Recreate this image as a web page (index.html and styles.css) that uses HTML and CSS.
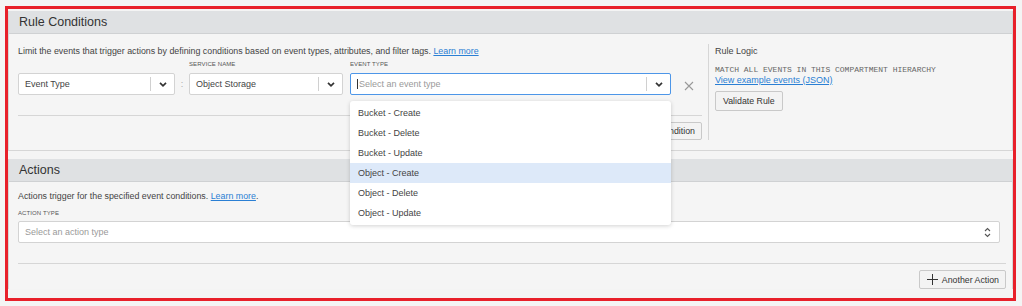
FILE: index.html
```html
<!DOCTYPE html>
<html lang="en">

<head>
    <meta charset="UTF-8">
    <title>Create Rule</title>
    <link rel="stylesheet" href="styles.css">
</head>

<body>
    <div class="frame">
        <section class="panel">
            <div class="panel-head">Rule Conditions</div>
            <div class="rule-body">
                <div class="cond-col">
                    <p class="hint">Limit the events that trigger actions by defining conditions based on event types, attributes, and filter tags. <a href="#">Learn more</a></p>
                    <div class="cond-row">
                        <div class="field f-type">
                            <span class="field-label"></span>
                            <div class="select">
                                <span class="select-text">Event Type</span>
                                <span class="select-arrow">
                                    <svg width="8" height="5" viewBox="0 0 8 5"><path d="M1 0.8l3 3 3-3" fill="none" stroke="#333" stroke-width="1.7"/></svg>
                                </span>
                            </div>
                        </div>
                        <span class="colon">:</span>
                        <div class="field f-service">
                            <span class="field-label">SERVICE NAME</span>
                            <div class="select">
                                <span class="select-text">Object Storage</span>
                                <span class="select-arrow">
                                    <svg width="8" height="5" viewBox="0 0 8 5"><path d="M1 0.8l3 3 3-3" fill="none" stroke="#333" stroke-width="1.7"/></svg>
                                </span>
                            </div>
                        </div>
                        <div class="field f-event">
                            <span class="field-label">EVENT TYPE</span>
                            <div class="select focused">
                                <span class="select-text placeholder"><i class="caret"></i>Select an event type</span>
                                <span class="select-arrow">
                                    <svg width="8" height="5" viewBox="0 0 8 5"><path d="M1 0.8l3 3 3-3" fill="none" stroke="#333" stroke-width="1.7"/></svg>
                                </span>
                            </div>
                            <ul class="menu">
                                <li>Bucket - Create</li>
                                <li>Bucket - Delete</li>
                                <li>Bucket - Update</li>
                                <li class="active">Object - Create</li>
                                <li>Object - Delete</li>
                                <li>Object - Update</li>
                            </ul>
                        </div>
                        <button class="remove" title="Remove">
                            <svg width="10" height="10" viewBox="0 0 10 10"><path d="M1 1l8 8M9 1l-8 8" stroke="#999" stroke-width="1.1"/></svg>
                        </button>
                    </div>
                    <div class="cond-foot">
                        <button class="btn">+ Another Condition</button>
                    </div>
                </div>
                <div class="logic-col">
                    <div class="logic-title">Rule Logic</div>
                    <div class="logic-code">MATCH ALL EVENTS IN THIS COMPARTMENT HIERARCHY</div>
                    <a class="logic-link" href="#">View example events (JSON)</a>
                    <button class="btn validate">Validate Rule</button>
                </div>
            </div>
        </section>

        <section class="panel actions">
            <div class="panel-head">Actions</div>
            <div class="actions-body">
                <p class="hint">Actions trigger for the specified event conditions. <a href="#">Learn more</a>.</p>
                <span class="field-label">ACTION TYPE</span>
                <div class="select wide">
                    <span class="select-text placeholder">Select an action type</span>
                    <svg class="spin" width="7" height="11" viewBox="0 0 7 11"><path d="M1 4l2.5-2.5L6 4M1 7l2.5 2.5L6 7" fill="none" stroke="#555" stroke-width="1.1"/></svg>
                </div>
                <div class="actions-foot">
                    <button class="btn add">
                        <svg width="11" height="11" viewBox="0 0 11 11"><path d="M5.5 0v11M0 5.5h11" stroke="#333" stroke-width="1"/></svg>
                        Another Action
                    </button>
                </div>
            </div>
        </section>
    </div>
</body>

</html>
```

FILE: styles.css
```css
body {
    margin: 0;
    background: #f4f4f4;
    font-family: "Liberation Sans", Arial, sans-serif;
    color: #444;
}

.frame {
    margin: 6px 0 0 5px;
    width: 1005px;
    height: 287px;
    border: 3px solid #e8202a;
    padding-top: 2px;
    box-sizing: content-box;
}

.panel {
    border: 1px solid #d6d6d6;
    border-top: none;
    background: #f5f5f5;
}

.panel-head {
    height: 22px;
    line-height: 22px;
    padding-left: 10px;
    background: #dfe1e3;
    border-bottom: 1px solid #cfd1d3;
    font-size: 12.5px;
    color: #333;
}

a {
    color: #2a7fd4;
}

.hint {
    margin: 0;
    font-size: 8.85px;
    line-height: 14px;
    color: #444;
}

/* rule conditions */
.rule-body {
    display: flex;
    padding: 10px 0 10px 9px;
}

.cond-col {
    width: 682px;
    margin-right: 8px;
}

.cond-row {
    display: flex;
    align-items: flex-end;
    margin-top: 2px;
}

.field {
    position: relative;
    display: flex;
    flex-direction: column;
}

.field-label {
    display: block;
    height: 8px;
    line-height: 8px;
    margin-bottom: 5px;
    font-size: 6px;
    color: #555;
    letter-spacing: 0.1px;
}

.f-type {
    width: 157px;
}

.f-service {
    width: 154px;
    margin-right: 7px;
}

.f-event {
    width: 321px;
}

.colon {
    width: 14px;
    text-align: center;
    font-size: 9px;
    color: #aaa;
    line-height: 22px;
}

.select {
    display: flex;
    align-items: center;
    height: 22px;
    box-sizing: border-box;
    border: 1px solid #d3d3d3;
    border-radius: 2px;
    background: #fff;
    padding-left: 6px;
}

.select.focused {
    border-color: #4d96e8;
}

.select-text {
    flex: 1;
    font-size: 9px;
    color: #444;
}

.placeholder {
    color: #9a9a9a;
}

.caret {
    display: inline-block;
    width: 1px;
    height: 10px;
    margin-right: 1px;
    vertical-align: -2px;
    background: #333;
}

.select-arrow {
    display: flex;
    align-items: center;
    justify-content: center;
    width: 23px;
    height: 14px;
    border-left: 1px solid #d0d0d0;
}

.menu {
    position: absolute;
    top: 41px;
    left: 0;
    right: 0;
    z-index: 5;
    list-style: none;
    margin: 0;
    padding: 2px 0;
    background: #fff;
    border-radius: 3px;
    box-shadow: 0 1px 4px rgba(0, 0, 0, 0.18);
}

.menu li {
    height: 20px;
    line-height: 20px;
    padding-left: 8px;
    font-size: 9px;
    color: #444;
}

.menu li.active {
    background: #dde9f9;
}

.remove {
    border: none;
    background: none;
    padding: 0;
    margin: 0 0 6px 13px;
    width: 10px;
    height: 10px;
}

.cond-foot {
    margin-top: 20px;
    border-top: 1px solid #d6d6d6;
    padding-top: 6px;
    display: flex;
    justify-content: flex-end;
    margin-right: -2px;
}

.btn {
    font-family: inherit;
    font-size: 8.8px;
    color: #333;
    background: #f3f3f3;
    border: 1px solid #c9c9c9;
    border-radius: 2px;
    height: 18px;
    padding: 0 6px;
}

.logic-col {
    border-left: 1px solid #d6d6d6;
    padding-left: 6px;
    display: flex;
    flex-direction: column;
    align-items: flex-start;
}

.logic-title {
    font-size: 9px;
    line-height: 14px;
    color: #444;
}

.logic-code {
    margin-top: 7px;
    font-family: "Liberation Mono", "DejaVu Sans Mono", monospace;
    font-size: 8px;
    line-height: 10px;
    color: #666;
}

.logic-link {
    font-size: 9px;
    line-height: 11px;
}

.validate {
    margin-top: 5px;
    height: 20px;
    padding: 0 7px;
}

/* actions */
.actions {
    margin-top: 8px;
    border-bottom: none;
}

.actions-body {
    padding: 7px 6px 0 9px;
}

.actions .field-label {
    margin-top: 6px;
    margin-bottom: 4px;
}

.select.wide {
    margin-right: 6px;
    padding-right: 8px;
}

.actions-foot {
    margin-top: 20px;
    border-top: 1px solid #d6d6d6;
    padding-top: 6px;
    display: flex;
    justify-content: flex-end;
}

.add {
    display: flex;
    align-items: center;
    gap: 4px;
    height: 19px;
    padding: 0 6px 0 7px;
    font-size: 8.8px;
}
```
